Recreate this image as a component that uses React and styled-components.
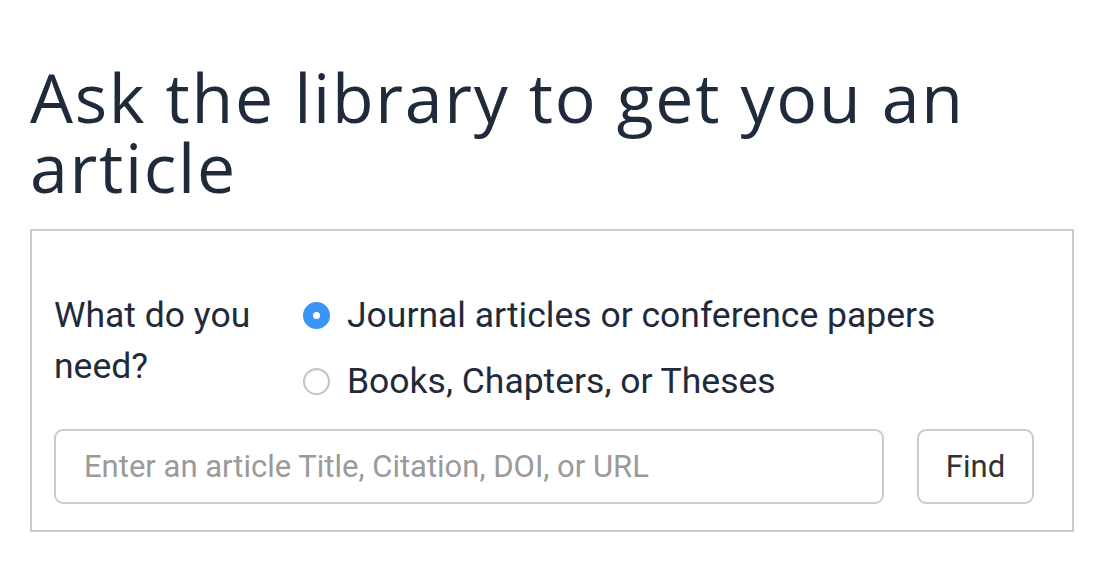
import React from 'react';
import styled, { createGlobalStyle } from 'styled-components';

const colors = {
  ink: '#1f2b3a',
  border: '#cbcbcb',
  blue: '#3b94f7',
  placeholder: '#9a9a9a',
};

const GlobalStyle = createGlobalStyle`
  body {
    margin: 0;
    background: #fff;
    font-family: Roboto, 'Liberation Sans', sans-serif;
    color: ${colors.ink};
  }
`;

const App = () => {
  return (
    <Page>
      <GlobalStyle />
      <Title>Ask the library to get you an article</Title>
      <Card>
        <Question>
          <Label>What do you need?</Label>
          <Options>
            <Option>
              <Radio type="radio" name="kind" defaultChecked />
              Journal articles or conference papers
            </Option>
            <Option>
              <Radio type="radio" name="kind" />
              Books, Chapters, or Theses
            </Option>
          </Options>
        </Question>
        <SearchRow>
          <SearchInput placeholder="Enter an article Title, Citation, DOI, or URL" />
          <FindButton>Find</FindButton>
        </SearchRow>
      </Card>
    </Page>
  );
};

const Page = styled.div`
  padding: 62px 30px 0 30px;
`;

const Title = styled.h1`
  width: 1000px;
  margin: 0 0 27px 0;
  font-family: 'Open Sans', sans-serif;
  font-weight: 400;
  font-size: 68px;
  line-height: 70px;
  letter-spacing: 1.7px;
  color: ${colors.ink};
`;

const Card = styled.div`
  box-sizing: border-box;
  width: 1044px;
  border: 2px solid ${colors.border};
  padding: 59px 38px 26px 22px;
`;

const Question = styled.div`
  display: grid;
  grid-template-columns: 249px 1fr;
`;

const Label = styled.div`
  width: 230px;
  font-size: 35.5px;
  line-height: 51px;
`;

const Options = styled.div`
  display: flex;
  flex-direction: column;
  gap: 15px;
`;

const Option = styled.label`
  display: flex;
  align-items: center;
  gap: 17px;
  font-size: 35.5px;
  line-height: 51px;
`;

const Radio = styled.input`
  appearance: none;
  box-sizing: border-box;
  width: 27px;
  height: 27px;
  margin: 0;
  border-radius: 50%;
  border: 2px solid #c4c4c4;
  background: #fff;
  box-shadow: inset 0 1px 2px rgba(0, 0, 0, 0.08);

  &:checked {
    border: 10px solid ${colors.blue};
    box-shadow: none;
  }
`;

const SearchRow = styled.div`
  display: flex;
  gap: 33px;
  margin-top: 22px;
`;

const SearchInput = styled.input`
  flex: 1;
  box-sizing: border-box;
  height: 75px;
  padding: 0 28px;
  border: 2px solid ${colors.border};
  border-radius: 9px;
  font-family: Roboto, sans-serif;
  font-size: 31px;
  color: ${colors.ink};

  &::placeholder {
    color: ${colors.placeholder};
  }
`;

const FindButton = styled.button`
  box-sizing: border-box;
  width: 117px;
  height: 75px;
  border: 2px solid ${colors.border};
  border-radius: 9px;
  background: #fff;
  font-family: Roboto, sans-serif;
  font-size: 31px;
  color: #333;
`;

export default App;
